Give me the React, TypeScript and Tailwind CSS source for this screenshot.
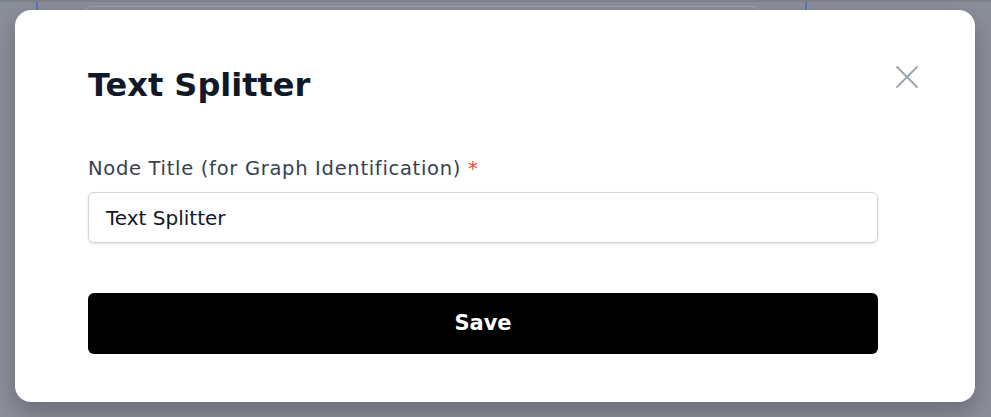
import React from "react";

export default function App() {
  return (
    <div className="relative w-full h-[417px] overflow-hidden bg-[#8b8f9b]" style={{ fontFamily: "'DejaVu Sans', 'Noto Sans', sans-serif" }}>
      {/* background canvas hints */}
      <div className="absolute left-[36px] top-0 w-[2px] h-[12px] bg-[#5a78b8]" />
      <div className="absolute left-[805px] top-0 w-[2px] h-[12px] bg-[#5a78b8]" />
      <div className="absolute left-[82px] top-[6px] w-[680px] h-[20px] rounded-t-[10px] border border-[#a3a6af]" />
      <div className="absolute left-0 top-0 w-full h-[2px] bg-[#7e828d]" />

      <div className="relative pt-[10px] pl-[15px]">
        <div className="w-[960px] h-[392px] bg-white rounded-[16px] shadow-[0_10px_25px_rgba(0,0,0,0.25)] pl-[73px] pr-[97px] pt-[55px]">
          <div className="flex items-start justify-between">
            <h2 className="text-[32px] leading-[40px] font-bold text-[#111827]">Text Splitter</h2>
            <button className="mt-[0px] -mr-[41px] text-[#9ca3af]">
              <svg width="24" height="24" viewBox="0 0 24 24" fill="none" stroke="currentColor" strokeWidth="1.8" strokeLinecap="round">
                <path d="M2 2L22 22M22 2L2 22" />
              </svg>
            </button>
          </div>
          <div className="mt-[52px]">
            <label className="block text-[19.5px] leading-[24px] font-medium text-[#374151] tracking-[0.7px]">
              Node Title (for Graph Identification) <span className="text-[#ef4444]">*</span>
            </label>
            <div className="mt-[11px] h-[51px] rounded-[6px] border border-[#d1d5db] shadow-sm flex items-center px-[17px] text-[20px] text-[#111827]">
              Text Splitter
            </div>
          </div>
          <button className="mt-[50px] w-full h-[61px] rounded-[6px] bg-black text-white text-[21px] font-bold flex items-center justify-center">
            Save
          </button>
        </div>
      </div>
    </div>
  );
}
